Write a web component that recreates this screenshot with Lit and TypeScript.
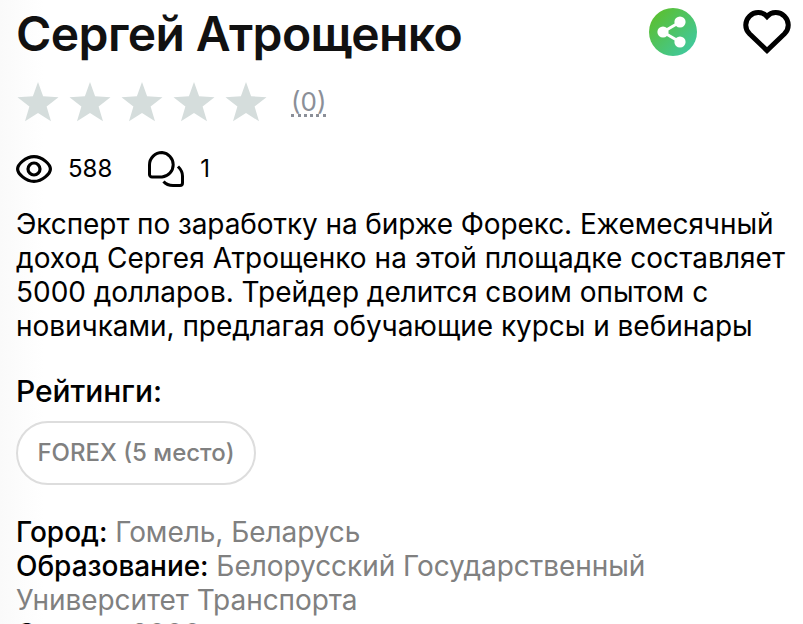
import { LitElement, html, css, svg } from "lit";
import { customElement } from "lit/decorators.js";

const star = html`<svg class="star" viewBox="0 0 42 40">${svg`<path d="M21 0 L26.1 14.3 L41.5 15.3 L29.6 24.6 L34 39.3 L21 31 L8 39.3 L12.4 24.6 L.5 15.3 L15.9 14.3Z"/>`}</svg>`;

@customElement("app-root")
export class AppRoot extends LitElement {
  static styles = css`
    :host {
      display: block;
      height: 624px;
      overflow: hidden;
      box-sizing: border-box;
      padding: 0 12px 0 16px;
      background: linear-gradient(90deg, #fafafa, #fff 44px);
      font: 400 28px/34px Inter, "Liberation Sans", sans-serif;
      color: #000;
    }
    svg { display: block; flex: none; }
    .head { display: flex; align-items: flex-start; height: 82px; }
    h1 { margin: 5px auto 0 0; font-size: 48px; line-height: 58px; font-weight: 600; letter-spacing: -.6px; color: #111; white-space: nowrap; }
    .share { margin: 8px 46px 0 0; }
    .heart { margin-top: 10px; }
    .rating { display: flex; height: 40px; }
    .star { width: 42px; height: 40px; margin: 0 9px 0 1px; fill: #d5dddc; }
    .votes { margin-left: 15px; height: 31px; margin-top: 1px; line-height: 38px; font-size: 26px; color: #8b8f98; border-bottom: 3px dotted #8b8f98; }
    .stats { display: flex; align-items: center; height: 40px; margin-top: 27px; font-size: 24px; }
    .views { margin: 0 36px 0 16px; }
    .comments { margin-left: 16px; }
    .about { margin: 18px 0 0; width: 775px; white-space: nowrap; }
    .about span { display: block; }
    .about span:nth-child(1) { letter-spacing: -.09px; }
    .about span:nth-child(2) { letter-spacing: .05px; }
    .about span:nth-child(3) { letter-spacing: -.02px; }
    .about span:nth-child(4) { letter-spacing: -.04px; }
    h2 { margin: 31px 0 0; font-size: 30px; line-height: 34px; font-weight: 500; letter-spacing: -.05px; }
    .tag { display: flex; align-items: center; justify-content: center; box-sizing: border-box; width: 240px; height: 64px; margin: 13px 0 30px; border: 2px solid #ddd; border-radius: 32px; background: #fff; color: #808080; font-size: 24px; font-weight: 500; white-space: nowrap; }
    .fact { color: #808080; white-space: nowrap; letter-spacing: -.05px; }
    .status b { letter-spacing: .5px; }
    b { color: #000; font-weight: 500; }
  `;

  render() {
    return html`
      <div class="head">
        <h1>Сергей Атрощенко</h1>
        <svg class="share" width="48" height="48" viewBox="0 0 48 48">
          <defs><linearGradient id="g" x1="0" y1="0" x2="1" y2="1"><stop offset=".1" stop-color="#5bbf2f"/><stop offset=".9" stop-color="#40c9a0"/></linearGradient></defs>
          <circle cx="24" cy="24" r="24" fill="url(#g)"/>
          <path d="M31 14 L14 24 L31 34" fill="none" stroke="#fff" stroke-width="3"/>
          <g fill="#fff"><circle cx="31" cy="14" r="5.6"/><circle cx="14" cy="24" r="5.6"/><circle cx="31" cy="34" r="5.6"/></g>
        </svg>
        <svg class="heart" width="48" height="44" viewBox="0 0 48 44" fill="none" stroke="#000" stroke-width="5">
          <path d="M24 6.5 C19.5 1.5 11.5 1.2 6.5 6.2 C1.5 11.2 1.5 18.8 6.5 23.8 L24 40.5 L41.5 23.8 C46.5 18.8 46.5 11.2 41.5 6.2 C36.5 1.2 28.5 1.5 24 6.5Z"/>
        </svg>
      </div>
      <div class="rating">${[1, 2, 3, 4, 5].map(() => star)}<span class="votes">(0)</span></div>
      <div class="stats">
        <svg width="36" height="28" viewBox="0 0 36 28" fill="none" stroke="#000" stroke-width="3.2">
          <path d="M1.6 14 C1.6 9.5 9.5 1.6 18 1.6 S34.4 9.5 34.4 14 S26.5 26.4 18 26.4 S1.6 18.5 1.6 14Z"/><circle cx="18" cy="14" r="6"/>
        </svg>
        <span class="views">588</span>
        <svg width="36" height="36" viewBox="0 0 36 36" fill="none" stroke="#000" stroke-width="3">
          <path d="M14 1.5 A12.3 12.3 0 0 1 14 26 H4 A2.5 2.5 0 0 1 1.5 23.5 V14 A12.5 12.5 0 0 1 14 1.5Z"/>
          <path d="M30 15.5 Q34.5 20 34.5 25 V32 A2.5 2.5 0 0 1 32 34.5 H25 Q19 34.5 15.5 30.5"/>
        </svg>
        <span class="comments">1</span>
      </div>
      <p class="about"><span>Эксперт по заработку на бирже Форекс. Ежемесячный</span><span>доход Сергея Атрощенко на этой площадке составляет</span><span>5000 долларов. Трейдер делится своим опытом с</span><span>новичками, предлагая обучающие курсы и вебинары</span></p>
      <h2>Рейтинги:</h2>
      <div class="tag">FOREX (5 место)</div>
      <div class="fact"><b>Город:</b> Гомель, Беларусь</div>
      <div class="fact"><b>Образование:</b> Белорусский Государственный<br>Университет Транспорта</div>
      <div class="fact status"><b>Статус:</b> 2000</div>
    `;
  }
}
